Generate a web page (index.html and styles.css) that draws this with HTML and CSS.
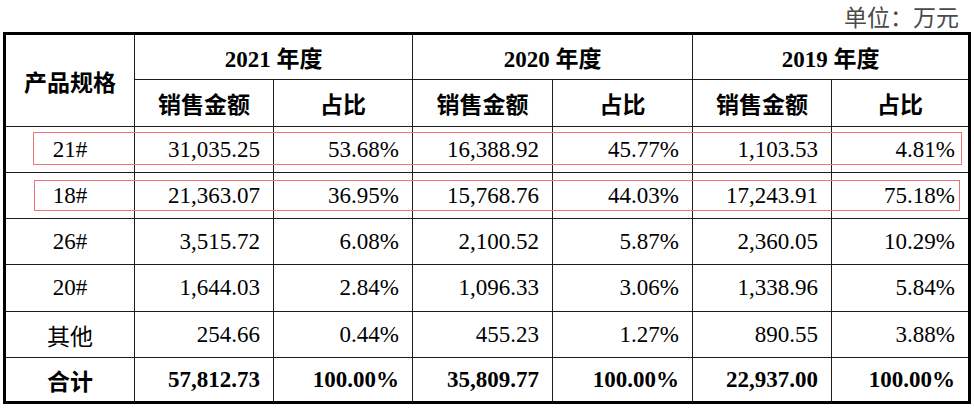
FILE: index.html
```html
<!DOCTYPE html>
<html lang="zh-CN">
<head>
<meta charset="utf-8">
<title>产品规格销售金额</title>
<link rel="stylesheet" href="styles.css">
</head>
<body>
<div class="page">
  <div class="unit">单位：万元</div>
  <table class="sales">
    <colgroup>
      <col class="c1"><col class="c2"><col class="c3"><col class="c4"><col class="c5"><col class="c6"><col class="c7">
    </colgroup>
    <thead>
      <tr class="h1">
        <th rowspan="2" class="name">产品规格</th>
        <th colspan="2">2021 年度</th>
        <th colspan="2">2020 年度</th>
        <th colspan="2" class="last">2019 年度</th>
      </tr>
      <tr class="h2">
        <th>销售金额</th><th>占比</th>
        <th>销售金额</th><th>占比</th>
        <th>销售金额</th><th class="last">占比</th>
      </tr>
    </thead>
    <tbody>
      <tr class="r46">
        <td class="name">21#</td><td>31,035.25</td><td>53.68%</td><td>16,388.92</td><td>45.77%</td><td>1,103.53</td><td class="last">4.81%</td>
      </tr>
      <tr class="r46">
        <td class="name">18#</td><td>21,363.07</td><td>36.95%</td><td>15,768.76</td><td>44.03%</td><td>17,243.91</td><td class="last">75.18%</td>
      </tr>
      <tr class="r46">
        <td class="name">26#</td><td>3,515.72</td><td>6.08%</td><td>2,100.52</td><td>5.87%</td><td>2,360.05</td><td class="last">10.29%</td>
      </tr>
      <tr class="r47">
        <td class="name">20#</td><td>1,644.03</td><td>2.84%</td><td>1,096.33</td><td>3.06%</td><td>1,338.96</td><td class="last">5.84%</td>
      </tr>
      <tr class="r46">
        <td class="name">其他</td><td>254.66</td><td>0.44%</td><td>455.23</td><td>1.27%</td><td>890.55</td><td class="last">3.88%</td>
      </tr>
      <tr class="total">
        <td class="name">合计</td><td>57,812.73</td><td>100.00%</td><td>35,809.77</td><td>100.00%</td><td>22,937.00</td><td class="last">100.00%</td>
      </tr>
    </tbody>
  </table>
  <div class="mark mark-a"></div>
  <div class="mark mark-b"></div>
</div>
</body>
</html>
```

FILE: styles.css
```css
html, body {
  margin: 0;
  padding: 0;
  background: #fff;
}

.page {
  position: relative;
  width: 974px;
  height: 409px;
  padding-left: 3px;
  box-sizing: border-box;
}

.unit {
  height: 32px;
  line-height: 32px;
  width: 968px;
  text-align: right;
  padding-right: 12px;
  box-sizing: border-box;
  font-family: "Noto Sans CJK SC", sans-serif;
  font-size: 23px;
  color: #4a4a4a;
}

.sales {
  border-collapse: separate;
  border-spacing: 0;
  border: 3px solid #000;
  table-layout: fixed;
  width: 968px;
  font-family: "Liberation Serif", "Noto Sans CJK SC", serif;
  font-size: 23px;
  color: #000;
}

.c1 { width: 129px; }
.c2 { width: 139px; }
.c3 { width: 139px; }
.c4 { width: 140px; }
.c5 { width: 140px; }
.c6 { width: 139px; }
.c7 { width: 136px; }

.sales th,
.sales td {
  box-sizing: border-box;
  border-right: 1px solid #1c1c1c;
  border-bottom: 1px solid #1c1c1c;
  padding: 0;
  vertical-align: middle;
  white-space: nowrap;
  overflow: hidden;
}

.sales th {
  font-weight: 700;
  text-align: center;
}

.sales td {
  text-align: right;
  padding-right: 13px;
  font-weight: 400;
}

.sales td.name {
  text-align: center;
  padding-right: 0;
}

.sales .last {
  border-right: none;
}

.h1 th { height: 45px; }
.h2 th { height: 47px; }
.r46 td { height: 46px; }
.r47 td { height: 47px; }

.total td {
  height: 43px;
  border-bottom: none;
  font-weight: 700;
}

.mark {
  position: absolute;
  box-sizing: border-box;
  border: 1.5px solid #f07575;
  pointer-events: none;
}

.mark-a {
  left: 33px;
  top: 132px;
  width: 929px;
  height: 33px;
}

.mark-b {
  left: 34px;
  top: 180px;
  width: 926px;
  height: 31px;
}
```
